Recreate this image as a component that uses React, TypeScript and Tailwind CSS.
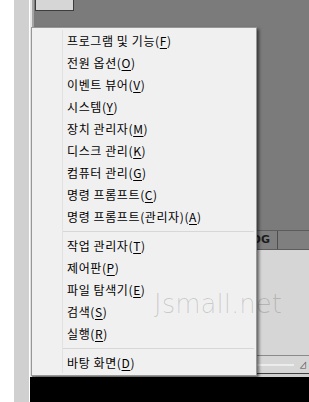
const topItems = [
  { label: "프로그램 및 기능", key: "F" },
  { label: "전원 옵션", key: "O" },
  { label: "이벤트 뷰어", key: "V" },
  { label: "시스템", key: "Y" },
  { label: "장치 관리자", key: "M" },
  { label: "디스크 관리", key: "K" },
  { label: "컴퓨터 관리", key: "G" },
  { label: "명령 프롬프트", key: "C" },
  { label: "명령 프롬프트(관리자)", key: "A" },
];

const midItems = [
  { label: "작업 관리자", key: "T" },
  { label: "제어판", key: "P" },
  { label: "파일 탐색기", key: "E" },
  { label: "검색", key: "S" },
  { label: "실행", key: "R" },
];

function MenuItem({ label, k }: { label: string; k: string }) {
  return (
    <div className="flex h-[22px] items-center pl-[35px] text-[12px] leading-none tracking-[0.6px] text-black">
      <span>
        {label}(<span className="underline underline-offset-[2px]">{k}</span>)
      </span>
    </div>
  );
}

function Separator() {
  return (
    <div className="flex h-[7px] items-center pl-[30px] pr-[2px]">
      <div className="h-px w-full bg-[#d7d7d7]" />
    </div>
  );
}

export default function App() {
  return (
    <div className="relative flex h-[402px] w-[309px] overflow-hidden bg-white font-['Malgun_Gothic','Noto_Sans_CJK_KR',sans-serif]">
      <div className="w-[14px] bg-white" />
      <div className="w-[15px] bg-[#d0d0d0]" />
      <div className="w-px bg-white" />

      <div className="flex flex-1 flex-col">
        <div className="flex h-[377px]">
          <div className="w-[2px] bg-[#e6e6e6]" />
          <div className="w-[2px] bg-[#a4a4a4]" />
          <div className="flex flex-1 flex-col">
            <div className="h-[230px] bg-[#7b7b7b]">
              <div className="ml-px h-[11px] w-[39px] border-x border-b border-[#3c3c3c] bg-[#d6d6d6]" />
            </div>
            <div className="h-px bg-[#5c5c5c]" />
            <div className="flex h-[18px] bg-[#7f7f7f]">
              <div className="flex w-[244px] items-center justify-end border-r border-[#4e4e4e] pr-[7px] font-['DejaVu_Sans',sans-serif] text-[11px] font-bold text-[#1c1c1c]">
                LOG
              </div>
              <div className="flex-1" />
            </div>
            <div className="h-px bg-[#5c5c5c]" />
            <div className="h-[105px] bg-[#d6d6d6]" />
            <div className="h-px bg-[#8a8a8a]" />
            <div className="relative flex h-[17px] items-center bg-[#d6d6d6]">
              <div className="ml-[223px] h-[2px] w-[37px] bg-[#ececec]" />
              <div className="ml-auto mr-[2px] text-[8px] text-[#505050]">⊿</div>
            </div>
            <div className="h-px bg-[#404040]" />
            <div className="h-[3px] bg-[#d0d0d0]" />
          </div>
        </div>
        <div className="flex-1 bg-black" />
      </div>

      {/* context menu */}
      <div className="absolute left-[31px] top-[27px] w-[226px] border border-[#979797] bg-[#f0f0f0] pb-px pt-[2px] shadow-[2px_2px_3px_rgba(0,0,0,0.55)]">
        <div className="absolute bottom-[2px] left-[30px] top-[2px] w-px bg-[#e2e2e2]" />
        {topItems.map((it) => (
          <MenuItem key={it.key} label={it.label} k={it.key} />
        ))}
        <Separator />
        {midItems.map((it) => (
          <MenuItem key={it.key} label={it.label} k={it.key} />
        ))}
        <Separator />
        <MenuItem label="바탕 화면" k="D" />
      </div>

      {/* watermark */}
      <div className="pointer-events-none absolute left-[154px] top-[291px] font-['DejaVu_Sans',sans-serif] text-[26px] font-extralight leading-none text-[rgba(0,0,0,0.16)]">
        Jsmall.net
      </div>
    </div>
  );
}
